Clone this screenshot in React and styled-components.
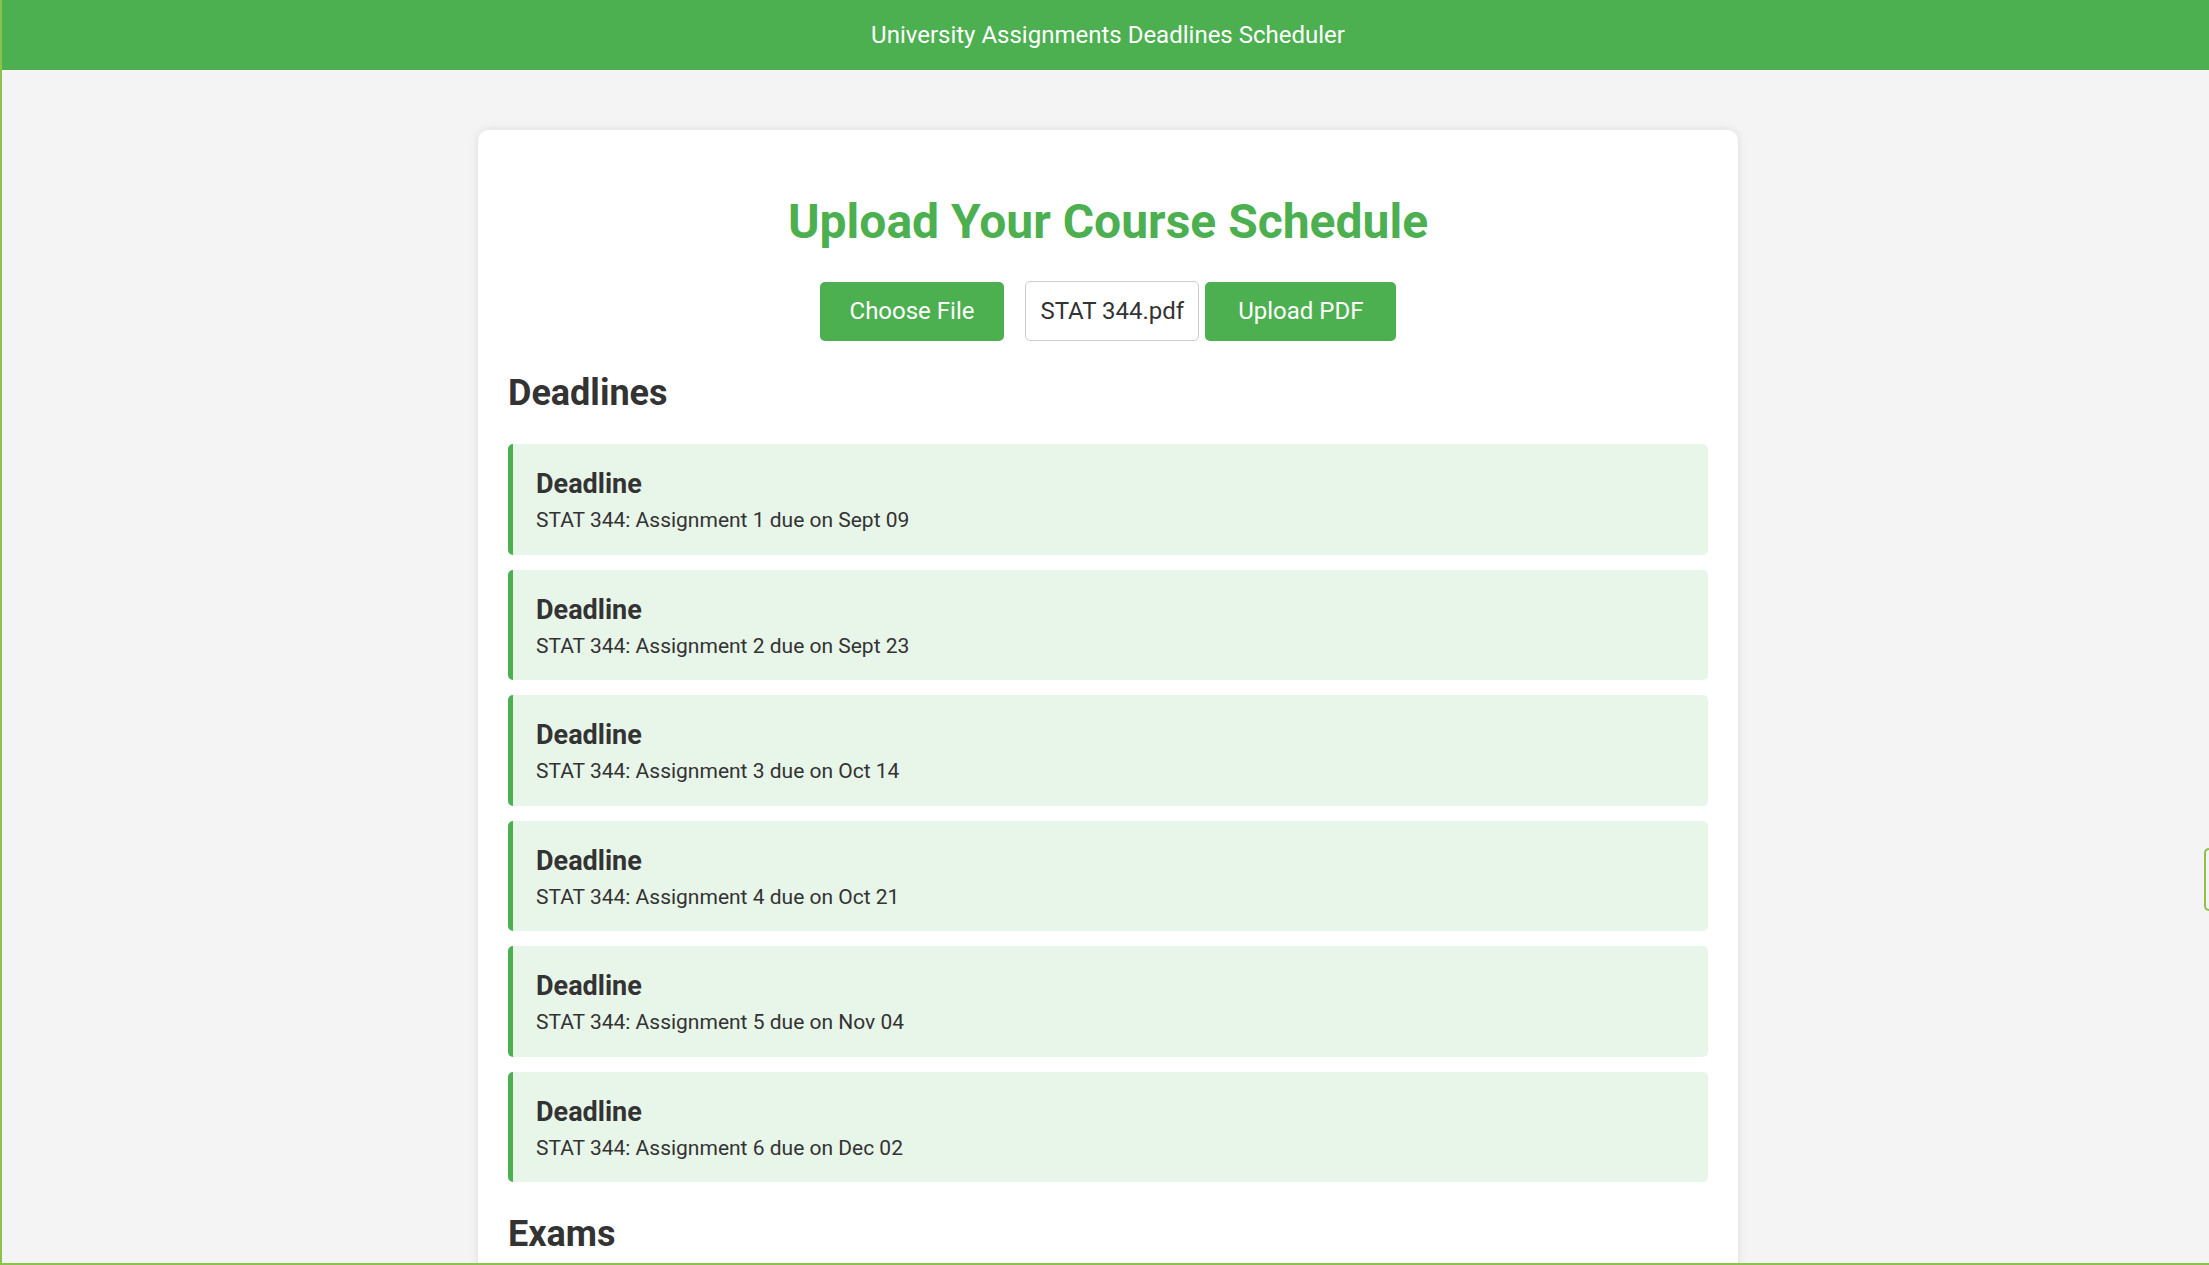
import styled, { createGlobalStyle } from 'styled-components';

const GlobalStyle = createGlobalStyle`
  html, body {
    margin: 0;
    padding: 0;
    overflow: hidden;
  }
  body {
    background: #f4f4f4;
    font-family: Roboto, "Liberation Sans", Arial, sans-serif;
    color: #333333;
  }
  ::-webkit-scrollbar {
    display: none;
  }
`;

const Page = styled.div`
    width: calc(100% + 7px);
    min-height: 100vh;
`;

const Header = styled.header`
    height: 70px;
    background: #4caf50;
    color: #ffffff;
    font-size: 24px;
    display: flex;
    align-items: center;
    justify-content: center;
`;

const Card = styled.main`
    width: 1200px;
    margin: 60px auto;
    padding: 30px;
    background: #ffffff;
    border-radius: 10px;
    box-shadow: 0 0 10px rgba(0, 0, 0, 0.1);
`;

const Title = styled.h1`
    margin: 33px 0 31px;
    font-size: 48px;
    font-weight: 700;
    text-align: center;
    color: #4caf50;
`;

const UploadForm = styled.form`
    display: flex;
    justify-content: center;
    align-items: center;
`;

const GreenButton = styled.button`
    height: 59px;
    padding: 0 ${(p) => p.$pad || 30}px;
    margin-right: ${(p) => p.$gap || 0}px;
    background: #4caf50;
    color: #ffffff;
    border: none;
    border-radius: 5px;
    font-family: inherit;
    font-size: 24px;
    cursor: pointer;
    &:hover {
    opacity: 0.9;
    }
`;

const FileName = styled.div`
    height: 60px;
    box-sizing: border-box;
    padding: 0 14px;
    margin-right: 6px;
    display: flex;
    align-items: center;
    border: 1px solid #cccccc;
    border-radius: 5px;
    font-size: 24px;
    color: #333333;
`;

const SectionTitle = styled.h2`
    margin: 31px 0 30px;
    font-size: 36px;
    font-weight: 700;
    color: #333333;
`;

const List = styled.div`
    display: flex;
    flex-direction: column;
    gap: 15px;
`;

const Item = styled.div`
    padding: 24px 23px 22.5px 23px;
    background: #e8f5e9;
    border-left: 5px solid #4caf50;
    border-radius: 5px;
`;

const ItemTitle = styled.h3`
    margin: 0 0 8px;
    font-size: 27px;
    font-weight: 700;
    color: #333333;
`;

const ItemText = styled.p`
    margin: 0;
    font-size: 21px;
    color: #333333;
`;

const Frame = styled.div`
    position: fixed;
    inset: 0;
    border-left: 2px solid #8bc34a;
    border-bottom: 2px solid #8bc34a;
    pointer-events: none;
`;

const SideTab = styled.div`
    position: fixed;
    right: 0;
    top: 848px;
    width: 3px;
    height: 59px;
    border: 2px solid #8bc34a;
    border-right: none;
    border-radius: 6px 0 0 6px;
`;

const deadlines = [
  'STAT 344: Assignment 1 due on Sept 09',
  'STAT 344: Assignment 2 due on Sept 23',
  'STAT 344: Assignment 3 due on Oct 14',
  'STAT 344: Assignment 4 due on Oct 21',
  'STAT 344: Assignment 5 due on Nov 04',
  'STAT 344: Assignment 6 due on Dec 02',
];

const exams = [
  'STAT 344: Midterm exam on Oct 28',
  'STAT 344: Final exam on Dec 12',
];

const Entry = ({ label, text }) => (
  <Item>
    <ItemTitle>{label}</ItemTitle>
    <ItemText>{text}</ItemText>
  </Item>
);

const App = () => (
  <Page>
    <GlobalStyle />
    <Header>University Assignments Deadlines Scheduler</Header>
    <Card>
      <Title>Upload Your Course Schedule</Title>
      <UploadForm onSubmit={(e) => e.preventDefault()}>
        <GreenButton type="button" $gap={21}>Choose File</GreenButton>
        <FileName>STAT 344.pdf</FileName>
        <GreenButton type="submit" $pad={33}>Upload PDF</GreenButton>
      </UploadForm>

      <SectionTitle>Deadlines</SectionTitle>
      <List>
        {deadlines.map((d) => <Entry key={d} label="Deadline" text={d} />)}
      </List>

      <SectionTitle>Exams</SectionTitle>
      <List>
        {exams.map((d) => <Entry key={d} label="Exam" text={d} />)}
      </List>
    </Card>
    <Frame />
    <SideTab />
  </Page>
);

export default App;
